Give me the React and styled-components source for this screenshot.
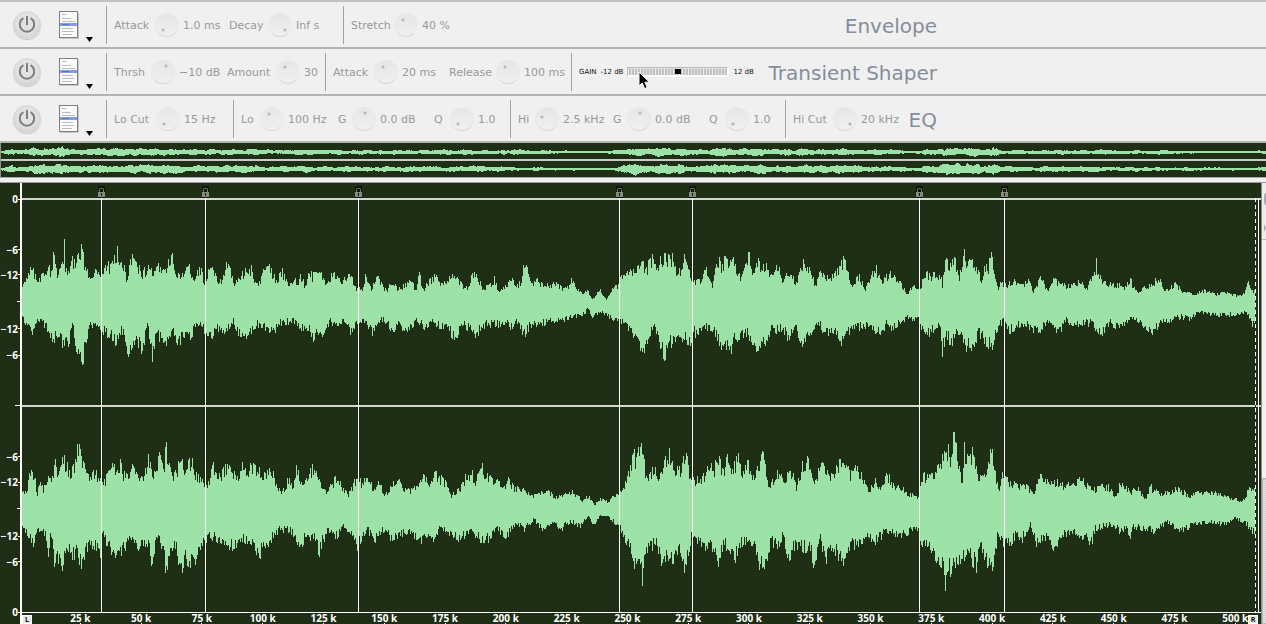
import React from "react";
import styled, { createGlobalStyle } from "styled-components";

const GlobalStyle = createGlobalStyle`
  *, *::before, *::after { box-sizing: border-box; }
  body { margin: 0; background: #f0f0f0; }
`;

const UI_FONT = '"DejaVu Sans", Verdana, sans-serif';
const SCALE_FONT = '"Noto Sans", "Open Sans", sans-serif';
const DARK = "#1e2f16";
const WAVE = "#9ce1a6";

/* ---------- effect rack ---------- */

const Page = styled.main`
  display: flex;
  flex-direction: column;
  min-height: 100vh;
  overflow: hidden;
  font-family: ${UI_FONT};
`;

const Rack = styled.section`
  border-top: 2px solid #c2c4c1;
`;

const RackRow = styled.section`
  height: 47px;
  border-bottom: 2px solid #b2b4b1;
  background: #f0f0f0;
`;

const RackInner = styled.div`
  display: flex;
  align-items: center;
  width: 74%;
  min-width: 937px;
  height: 100%;
  padding-left: 13px;
`;

const PowerButton = styled.button`
  display: grid;
  place-items: center;
  flex: none;
  width: 28px;
  height: 28px;
  padding: 0;
  border: 1px solid #d6d6d6;
  border-radius: 50%;
  background: radial-gradient(circle at 50% 40%, #e2e2e2 45%, #cbcbcb 100%);
  box-shadow: 0 1px 1px #c4c4c4;
`;

const PresetButton = styled.button`
  display: flex;
  align-items: flex-end;
  flex: none;
  gap: 7px;
  margin: 0 13px 0 18px;
  padding: 0;
  border: 0;
  background: none;
`;

const MenuArrow = styled.svg`
  margin-bottom: -3px;
`;

const Group = styled.div`
  display: flex;
  align-items: center;
  flex: none;
  height: 38px;
  padding-left: 7px;
  border-left: 1px solid #a3a3a3;
`;

const Param = styled.label`
  display: grid;
  grid-template-columns: ${(p) => p.$label}px 28px ${(p) => p.$value}px;
  align-items: center;
  color: #999;
  font-size: 11px;
  line-height: 16px;
  white-space: nowrap;
`;

const ParamText = styled.span`
  padding-top: 3px;
`;

const Knob = styled.input`
  appearance: none;
  width: 24px;
  height: 24px;
  margin: 0;
  border: 1px solid #e8e8e8;
  border-bottom-color: #d8d8d8;
  border-radius: 50%;
  background:
    radial-gradient(circle at ${(p) => p.$x}px ${(p) => p.$y}px, #b8b8b8 1px, transparent 2px),
    linear-gradient(#e6e6e6, #f0f0f0);
  &::-webkit-slider-thumb { appearance: none; width: 1px; height: 1px; }
`;

const GainField = styled.label`
  display: flex;
  align-items: center;
  gap: 4px;
  padding-top: 1px;
  color: #111;
  font-size: 7px;
  line-height: 8px;
  white-space: nowrap;
`;

const GainTrack = styled.span`
  position: relative;
  display: flex;
`;

const GainSlider = styled.input`
  appearance: none;
  width: 102px;
  height: 10px;
  margin: 0;
  padding: 0 2px;
  border: 1px solid #bcbcbc;
  border-right: 2px solid #fff;
  border-bottom: 2px solid #fff;
  background:
    linear-gradient(#dedede 1px, transparent 1px),
    repeating-linear-gradient(90deg, #e8e8e8 0 1px, #c0c0c0 1px 3px);
  &::-webkit-slider-thumb {
    appearance: none;
    width: 6px;
    height: 5px;
    background: #000;
  }
`;

const Pointer = styled.svg`
  position: absolute;
  left: 11px;
  top: 4px;
`;

const RackTitle = styled.h2`
  margin: 0 0 0 auto;
  padding-top: 2px;
  color: #868d9c;
  font-size: 20px;
  font-weight: 400;
  line-height: 24px;
  white-space: nowrap;
`;

function PowerIcon() {
  return (
    <svg width="18" height="18" viewBox="0 0 18 18" fill="none" stroke="#7e7e7e" strokeWidth="2" aria-hidden="true">
      <path d="M5.4 2.2A7.2 7.2 0 1 0 12.6 2.2" />
      <path d="M9 0V9" />
    </svg>
  );
}

function PresetIcon() {
  return (
    <svg width="20" height="28" viewBox="0 0 20 28" aria-hidden="true">
      <rect x="0.5" y="0.5" width="18" height="26" fill="#fafafa" stroke="#7f7f7f" />
      <path d="M1 27.5H19.5V2" fill="none" stroke="#c6c6c6" />
      <rect x="1" y="12" width="17" height="3" fill="#7f9ce6" />
      <path d="M3 3.5H7M3 7.5H12M3 10.5H16M3 17.5H14M3 20.5H15M3 23.5H13" stroke="#b9bcc4" />
      <path d="M3 13.5H10" stroke="#5c77c0" />
    </svg>
  );
}

/* dot: position of the indicator on the 24px dial */
const DOTS = {
  low: [7, 16],
  high: [16, 16],
  top: [12, 5],
  right: [14, 5],
  upperLeft: [8, 6],
  left: [6, 9],
};

const RACKS = [
  {
    title: "Envelope",
    groups: [
      [
        ["Attack", "1.0 ms", 41, 46, "low"],
        ["Decay", "Inf s", 39, 47, "high"],
      ],
      [["Stretch", "40 %", 43, 40, "upperLeft"]],
    ],
  },
  {
    title: "Transient Shaper",
    gain: true,
    groups: [
      [
        ["Thrsh", "\u221210 dB", 37, 48, "right"],
        ["Amount", "30", 49, 21, "upperLeft"],
      ],
      [
        ["Attack", "20 ms", 41, 47, "upperLeft"],
        ["Release", "100 ms", 47, 47, "upperLeft"],
      ],
    ],
  },
  {
    title: "EQ",
    groups: [
      [["Lo Cut", "15 Hz", 42, 49, "low"]],
      [
        ["Lo", "100 Hz", 19, 50, "upperLeft"],
        ["G", "0.0 dB", 14, 54, "top"],
        ["Q", "1.0", 16, 32, "low"],
      ],
      [
        ["Hi", "2.5 kHz", 17, 50, "left"],
        ["G", "0.0 dB", 14, 54, "top"],
        ["Q", "1.0", 16, 32, "low"],
      ],
      [["Hi Cut", "20 kHz", 40, 42, "high"]],
    ],
  },
];

function Effect({ title, groups, gain }) {
  return (
    <RackRow aria-label={title}>
      <RackInner>
        <PowerButton type="button" aria-label={`${title} power`}>
          <PowerIcon />
        </PowerButton>
        <PresetButton type="button" aria-label={`${title} presets`}>
          <PresetIcon />
          <MenuArrow width="7" height="5" viewBox="0 0 7 5" aria-hidden="true">
            <path d="M0 0H7L3.5 5Z" fill="#000" />
          </MenuArrow>
        </PresetButton>
        {groups.map((params, g) => (
          <Group key={g}>
            {params.map(([name, value, labelWidth, valueWidth, dot]) => (
              <Param key={name} $label={labelWidth} $value={valueWidth}>
                <ParamText>{name}</ParamText>
                <Knob type="range" $x={DOTS[dot][0]} $y={DOTS[dot][1]} />
                <ParamText>{value}</ParamText>
              </Param>
            ))}
          </Group>
        ))}
        {gain && (
          <Group>
            <GainField>
              <span>GAIN</span>
              <span>-12 dB</span>
              <GainTrack>
                <GainSlider type="range" min="-12" max="12" defaultValue="0" />
                <Pointer width="14" height="20" viewBox="0 0 14 20" aria-hidden="true">
                  <path d="M1 1V15L4.3 12L6.6 17.6L9.2 16.5L6.9 11.2H11.4Z" fill="#000" stroke="#fff" />
                </Pointer>
              </GainTrack>
              <span>12 dB</span>
            </GainField>
          </Group>
        )}
        <RackTitle>{title}</RackTitle>
      </RackInner>
    </RackRow>
  );
}

/* ---------- wave data: x,y pairs along each outline ---------- */

const parse = (s) => s.trim().split(/\s+/).map((p) => p.split(",").map(Number));

const CHANNELS = [
  {
    name: "Left",
    mid: 302,
    top: 200,
    upper: parse(`22,286 26,280 32,265 35,276 40,276 44,276 48,264 50,272 53,254 55,256 57,272 61,268 63,264 64,244 65,264
      69,273 72,256 75,264 77,251 80,250 82,241 84,260 87,262 88,275 92,271 96,270 101,274 107,266 112,264 116,251 118,253
      120,263 123,262 126,280 131,255 134,262 139,266 142,274 148,265 152,274 157,262 160,266 164,268 168,263 172,258
      175,270 180,276 186,268 189,267 193,277 201,268 204,286 206,276 211,263 214,272 218,280 222,280 226,265 230,270
      235,284 240,274 247,271 251,267 254,280 259,283 263,268 268,262 272,272 276,280 282,270 288,287 293,277 297,284
      300,276 305,285 309,272 312,276 317,273 320,273 325,282 334,273 340,282 345,279 350,273 355,288 358,288 362,290
      365,274 371,288 378,276 383,286 387,292 391,279 397,289 405,285 411,278 415,290 419,275 424,289 428,281 435,276
      441,284 448,276 455,275 462,285 467,287 472,272 477,277 483,288 490,284 494,278 498,290 505,286 512,278 516,286
      521,280 523,266 528,270 531,283 536,280 545,286 555,282 562,288 567,287 571,280 576,288 583,294 587,289 592,299
      596,294 600,290 606,300 612,288 618,285 620,278 626,274 633,270 641,262 646,268 652,257 656,264 660,258 667,256
      673,258 677,274 684,259 690,274 694,282 700,279 706,270 712,284 718,258 722,266 727,252 729,265 733,249 736,270
      741,278 745,264 749,252 752,272 754,272 757,258 761,267 766,266 772,275 777,262 783,282 788,270 796,284 803,262
      808,266 815,285 821,270 827,278 833,272 840,266 843,257 847,272 851,285 859,275 865,288 875,266 882,280 890,274
      900,282 907,294 912,286 919,290 925,272 930,275 940,274 942,284 946,257 950,266 955,258 959,275 964,249 967,264
      971,258 975,262 981,280 986,262 988,270 989,254 992,254 994,276 998,286 1001,282 1007,284 1013,280 1022,284 1028,280
      1033,292 1040,276 1047,290 1053,278 1060,284 1067,286 1073,284 1080,280 1087,290 1090,275 1093,274 1096,262 1098,274
      1105,282 1110,284 1118,284 1124,287 1130,280 1138,293 1145,286 1152,284 1158,277 1165,290 1175,284 1183,291
      1195,294 1205,290 1215,294 1225,292 1238,296 1244,294 1248,281 1253,292 1256,288`),
    lower: parse(`22,318 26,325 32,336 36,322 43,324 48,330 53,343 56,334 62,345 68,345 72,325 76,350 79,360 82,363 85,348
      89,328 95,326 101,332 106,334 113,338 115,350 117,338 122,332 128,352 134,344 142,350 147,328 150,340 152,356 156,335
      162,340 168,345 173,332 178,347 185,332 190,338 195,328 200,322 205,336 210,338 217,328 225,334 233,322 237,335
      247,338 256,325 265,330 272,333 280,324 292,322 300,328 308,330 314,342 318,332 324,336 330,322 337,328 343,322
      350,333 357,324 364,323 371,334 380,320 388,324 392,334 397,324 406,331 417,322 425,328 432,320 440,328 449,332
      456,340 463,325 475,335 486,325 500,326 507,320 512,332 516,320 524,336 530,326 545,324 560,322 570,318 585,314
      587,308 592,318 600,312 606,315 612,320 618,322 625,326 632,334 638,340 642,354 647,352 650,336 654,325 660,345
      664,358 668,345 675,342 682,339 690,342 694,334 700,335 706,328 713,330 720,348 724,346 729,356 734,340 742,338
      747,332 752,345 757,355 762,348 770,332 778,330 785,333 788,345 795,325 802,346 808,332 812,338 818,323 825,337
      832,330 837,340 845,342 850,330 860,328 870,326 877,334 882,336 886,325 893,330 900,323 907,318 919,321 921,332
      930,334 938,325 940,332 942,353 946,335 951,345 956,330 962,340 967,348 973,352 978,335 984,340 991,350 996,332
      1003,320 1008,332 1015,328 1022,324 1032,330 1040,330 1050,322 1059,334 1066,322 1072,326 1082,324 1092,325
      1101,334 1110,324 1117,328 1130,320 1140,322 1151,333 1158,326 1165,322 1180,318 1190,319 1200,312 1210,315
      1225,316 1240,314 1246,312 1252,325 1256,328`),
  },
  {
    name: "Right",
    mid: 509,
    top: 407,
    upper: parse(`22,493 26,490 29,476 32,468 35,480 37,494 40,480 43,488 46,482 48,474 52,478 55,456 57,474 60,464 63,454
      66,464 70,472 75,462 76,447 79,450 82,464 85,457 88,478 92,472 97,474 104,482 109,472 112,465 116,472 119,466
      120,452 123,475 130,474 134,462 137,478 144,476 149,455 152,480 157,460 160,447 163,468 164,462 165,435 167,462
      172,475 180,463 186,464 192,463 196,476 202,480 206,486 212,470 215,461 218,478 225,466 232,472 238,476 241,460
      247,474 250,465 257,468 263,472 268,472 272,470 276,482 281,494 288,478 293,484 296,466 302,486 309,472 314,464
      318,480 320,484 327,492 335,478 342,486 348,494 356,478 362,482 370,480 373,492 379,480 384,494 392,486 397,478
      403,488 410,490 418,486 424,475 430,484 434,472 440,478 446,482 451,494 458,490 465,478 472,472 475,482 482,466
      486,476 495,480 502,486 508,480 515,488 524,488 532,496 540,492 548,490 555,498 562,494 572,491 582,500 588,496
      594,505 600,498 608,502 615,494 620,493 625,480 630,465 633,452 636,458 640,450 643,448 645,470 649,476 654,464
      659,478 664,460 670,451 674,468 680,470 686,452 689,475 694,480 704,476 711,464 714,468 718,453 722,470 728,456
      732,468 738,458 743,474 748,460 753,475 758,464 763,451 766,470 769,486 775,476 781,470 784,484 790,466 796,486
      803,462 808,458 814,484 820,462 826,472 834,475 841,455 845,462 850,474 855,468 862,476 868,490 875,480 880,490
      886,470 892,484 900,486 905,492 912,494 919,497 921,478 926,474 930,474 936,476 938,458 942,456 946,445 950,455
      954,433 956,432 958,465 962,478 964,448 968,460 974,450 978,478 984,474 988,455 991,448 994,468 998,490 1002,474
      1010,482 1018,486 1025,484 1033,494 1041,474 1050,485 1056,480 1065,486 1074,480 1083,480 1092,490 1100,486
      1108,486 1115,496 1121,480 1130,492 1138,488 1145,498 1150,486 1160,494 1170,492 1178,488 1190,496 1198,492
      1205,490 1218,494 1230,498 1243,500 1248,490 1252,486 1256,490`),
    lower: parse(`22,525 26,535 33,546 37,530 45,535 48,552 51,535 54,566 59,560 61,572 65,558 68,548 72,560 77,550 80,566
      85,556 90,545 98,548 100,556 103,532 107,548 115,554 120,556 127,543 133,540 138,556 143,544 148,546 152,566
      157,538 162,552 166,572 170,550 175,548 181,572 185,556 189,566 194,562 198,550 204,542 210,538 220,540 228,545
      238,550 244,540 250,544 257,557 265,548 272,538 280,530 290,532 300,545 307,538 315,538 319,556 321,545 328,530
      336,538 343,528 350,535 357,547 367,530 374,541 385,530 390,540 400,535 410,534 418,545 426,536 434,540 440,530
      450,534 460,540 470,532 480,540 490,540 497,530 506,538 515,524 524,530 533,520 543,530 552,524 562,529 570,522
      580,528 588,516 594,525 600,515 608,518 617,526 620,530 625,540 632,558 637,570 642,580 645,555 650,550 656,542
      661,566 667,555 672,566 678,552 685,570 688,555 692,534 700,545 710,548 718,564 723,545 730,550 734,562 740,545
      748,540 755,550 761,570 766,568 770,545 778,545 783,536 788,562 795,545 805,550 809,545 814,568 819,538 825,560
      832,545 838,560 843,562 850,545 858,550 866,536 875,542 890,530 900,538 915,528 919,530 921,548 930,548 938,560
      943,566 945,584 948,570 954,572 962,555 970,560 976,568 981,545 985,560 990,575 994,565 997,535 1001,542 1008,545
      1015,538 1022,540 1030,524 1036,545 1045,538 1053,547 1060,540 1070,532 1080,540 1088,540 1091,545 1095,530
      1110,525 1120,532 1127,528 1129,545 1132,528 1145,530 1155,532 1167,522 1180,532 1195,525 1210,522 1225,526
      1233,518 1245,524 1252,532 1256,536`),
  },
];

const PLOT_X = 22;
const WAVE_END = 1256;
const PLOT_WIDTH = 1239;
const OVERVIEW_WIDTH = 1266;

function levelAt(points, x) {
  let i = 1;
  while (i < points.length - 1 && points[i][0] < x) i += 1;
  const [x0, y0] = points[i - 1];
  const [x1, y1] = points[i];
  return y0 + ((y1 - y0) * (x - x0)) / (x1 - x0);
}

function noise(n) {
  const v = Math.sin(n * 127.1 + 311.7) * 43758.5453;
  return v - Math.floor(v);
}

/* stepped outline, one column per unit */
function outline(columns, upper, lower) {
  let d = `M0 ${upper(0)}`;
  for (let i = 0; i < columns; i += 1) d += `V${upper(i)}H${i + 1}`;
  for (let i = columns - 1; i >= 0; i -= 1) d += `V${lower(i)}H${i}`;
  return `${d}Z`;
}

function channelPath({ mid, upper, lower }) {
  const edge = (points, seed) => (i) => {
    const amp = levelAt(points, i + PLOT_X) - mid;
    return Math.round(mid + amp * (1.12 - 0.36 * noise(i + seed)));
  };
  return outline(WAVE_END - PLOT_X, edge(upper, mid), edge(lower, mid + 5000));
}

function overviewPath({ upper, lower, mid }, centre) {
  const edge = (points, seed) => (i) => {
    const x = PLOT_X + (i / OVERVIEW_WIDTH) * (WAVE_END - PLOT_X);
    const amp = (levelAt(points, x) - mid) / 12;
    const size = Math.max(1, Math.round(Math.abs(amp) * (0.75 + 0.4 * noise((i >> 1) + seed))));
    return centre + Math.sign(amp) * size;
  };
  return outline(OVERVIEW_WIDTH, edge(upper, mid), edge(lower, mid + 900));
}

/* ---------- overview ---------- */

const Overview = styled.section`
  flex: none;
  margin-bottom: 4px;
  border-bottom: 1px solid #a9aba8;
  border-left: 1px solid #8d918b;
  background: ${DARK};
`;

const OverviewLane = styled.svg`
  display: block;
  width: 100%;
  height: 16px;
  & + & {
    height: 18px;
    border-top: 2px solid #c9ccc8;
  }
`;

/* ---------- editor ---------- */

const Editor = styled.section`
  display: grid;
  grid-template-columns: 20px minmax(0, 1fr) 5px;
  flex: 1;
  min-height: 442px;
  border-top: 1px solid #9a9c99;
  background: ${DARK};
  color: #fff;
  font-family: ${SCALE_FONT};
  font-size: 10px;
  font-weight: 700;
  line-height: 12px;
`;

const LevelScale = styled.div`
  display: grid;
  grid-template-rows:
    10px 12px 32fr 25fr 25fr 28fr 27fr 26fr 37fr 1px 38fr
    25fr 26fr 27fr 28fr 23fr 33fr 12px 6px;
`;

const Level = styled.span`
  grid-row: ${(p) => p.$row};
  display: flex;
  align-items: center;
  justify-content: flex-end;
  white-space: nowrap;
  &::after {
    content: "";
    width: ${(p) => p.$tick}px;
    height: 1px;
    background: #fff;
  }
`;

const LEVELS = [
  [2, "0", 2], [4, "\u22126", 2], [5, "\u221212", 2], [6, "", 3], [7, "\u221212", 2], [8, "\u22126", 2],
  [10, "", 5],
  [12, "\u22126", 2], [13, "\u221212", 2], [14, "", 3], [15, "\u221212", 2], [16, "\u22126", 2], [18, "0", 2],
];

const Plot = styled.div`
  position: relative;
  display: grid;
  grid-template-rows: 15px minmax(0, 1fr) minmax(0, 1fr) 12px;
  border-left: 2px solid #fff;
`;

const Channel = styled.svg`
  display: block;
  width: 100%;
  height: 100%;
  border-top: 2px solid #d3d6d1;
`;

const Marker = styled.div`
  position: absolute;
  top: 3px;
  bottom: 12px;
  left: ${(p) => p.$at}%;
  display: flex;
  flex-direction: column;
  align-items: center;
  width: 9px;
  margin-left: -4px;
  &::after {
    content: "";
    flex: 1;
    width: 1px;
    background: #fff;
  }
`;

const EndLine = styled.div`
  position: absolute;
  top: 15px;
  bottom: 12px;
  left: ${(p) => p.$at}%;
  width: 1px;
  background: ${(p) => (p.$dashed ? `repeating-linear-gradient(#fff 0 4px, ${DARK} 4px 7px)` : "#fff")};
`;

const TimeScale = styled.ol`
  display: flex;
  margin: 0;
  padding: 0 0 0 28px;
  border-top: 1px solid #fff;
  overflow: hidden;
  list-style: none;
  line-height: 10px;
`;

const TimeMark = styled.li`
  flex: none;
  width: 5.02%;
  background: linear-gradient(#fff, #fff) 50% 100% / 1px 1px no-repeat;
  text-align: center;
  white-space: nowrap;
`;

const LocatorTag = styled.span`
  position: absolute;
  bottom: 0;
  left: ${(p) => p.$at}%;
  width: 10px;
  height: 9px;
  border: 1px solid #fff;
  background: #e8e8e8;
  color: #111;
  font-size: 7px;
  line-height: 8px;
  text-align: center;
`;

const SideBar = styled.div`
  display: grid;
  grid-template-rows: 57px 1fr 33%;
  border-left: 1px solid #8b8f88;
  background: #f2f2f2;
`;

const SideArrows = styled.div`
  border-bottom: 1px solid #bbb;
  background: #ededed;
`;

const SideThumb = styled.div`
  grid-row: 3;
  border: 1px solid #b5b5b5;
  border-right: 0;
  background: repeating-linear-gradient(#cfcfcf 0 1px, #e6e6e6 1px 2px);
`;

const at = (x) => ((x - PLOT_X) / PLOT_WIDTH) * 100;
const MARKERS = [101, 205, 358, 619, 692, 919, 1004];
const TIMES = Array.from({ length: 20 }, (_, i) => (i + 1) * 25);

function LockIcon() {
  return (
    <svg width="9" height="12" viewBox="0 0 9 12" aria-hidden="true">
      <rect x="1" y="0" width="7" height="12" fill="#0d140b" />
      <path d="M2.5 6V3.2Q2.5 2.5 3.5 2.5H5.5Q6.5 2.5 6.5 3.2V6" fill="none" stroke="#777c75" />
      <rect x="1" y="6" width="7" height="5" fill="#858983" />
      <rect x="4" y="7" width="1" height="3" fill="#0d140b" />
    </svg>
  );
}

export default function App() {
  return (
    <>
      <GlobalStyle />
      <Page>
        <Rack aria-label="Effects">
          {RACKS.map((rack) => (
            <Effect key={rack.title} {...rack} />
          ))}
        </Rack>

        <Overview aria-label="Overview">
          {CHANNELS.map((channel, i) => (
            <OverviewLane
              key={channel.name}
              viewBox={`0 0 ${OVERVIEW_WIDTH} 16`}
              preserveAspectRatio="none"
              shapeRendering="crispEdges"
            >
              <path d={overviewPath(channel, 9 - i)} fill={WAVE} />
            </OverviewLane>
          ))}
        </Overview>

        <Editor aria-label="Waveform">
          <LevelScale>
            {LEVELS.map(([row, text, tick]) => (
              <Level key={row} $row={row} $tick={tick}>{text}</Level>
            ))}
          </LevelScale>
          <Plot>
            <div />
            {CHANNELS.map((channel) => (
              <Channel
                key={channel.name}
                viewBox={`0 ${channel.top} ${PLOT_WIDTH} 205`}
                preserveAspectRatio="none"
                shapeRendering="crispEdges"
              >
                <path d={channelPath(channel)} fill={WAVE} />
              </Channel>
            ))}
            <TimeScale>
              {TIMES.map((t) => (
                <TimeMark key={t}>{t} k</TimeMark>
              ))}
            </TimeScale>
            {MARKERS.map((x) => (
              <Marker key={x} $at={at(x)}>
                <LockIcon />
              </Marker>
            ))}
            <EndLine $at={at(1255)} $dashed />
            <EndLine $at={at(1258)} />
            <LocatorTag $at={0}>L</LocatorTag>
            <LocatorTag $at={at(1248)}>R</LocatorTag>
          </Plot>
          <SideBar>
            <SideArrows>
              <svg width="4" height="56" viewBox="0 0 4 56" aria-hidden="true">
                <path d="M4 9L2 12V20L4 23ZM2 41L4 45L2 49Z" fill="#a5abb5" />
              </svg>
            </SideArrows>
            <SideThumb />
          </SideBar>
        </Editor>
      </Page>
    </>
  );
}
